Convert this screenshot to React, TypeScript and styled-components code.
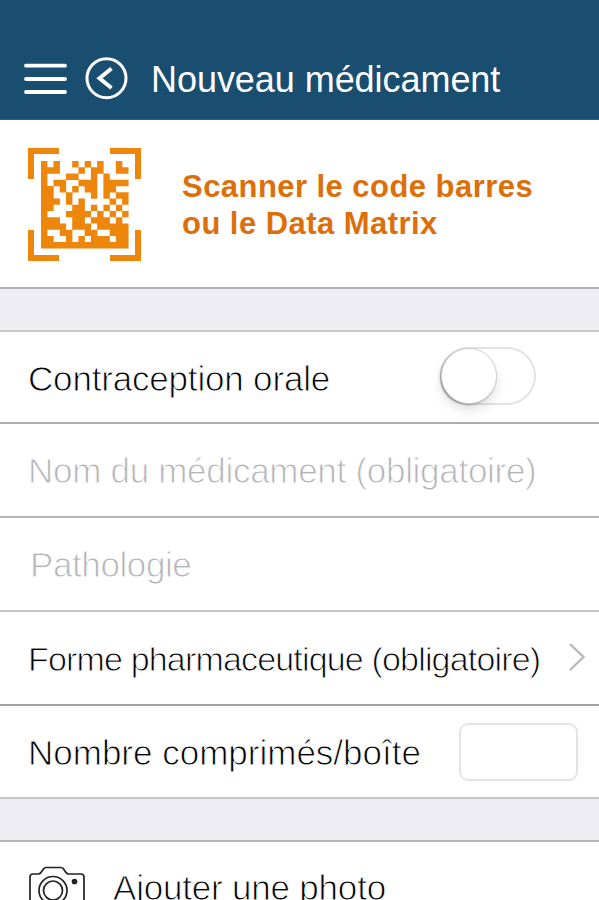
import React from "react";
import styled, { createGlobalStyle } from "styled-components";

const GlobalStyle = createGlobalStyle`
  * { box-sizing: border-box; }
  body { margin: 0; background: #fff; overflow: hidden; }
`;

const Screen = styled.div`
  width: 599px;
  height: 900px;
  overflow: hidden;
  display: flex;
  flex-direction: column;
  background: #fff;
  font-family: "Liberation Sans", Arial, Helvetica, sans-serif;
`;

const Header = styled.header`
  height: 120px;
  flex: none;
  display: flex;
  align-items: center;
  padding: 38px 0 0 24px;
  background: #1a4e71;
  border-bottom: 1px solid #2f5f80;
  color: #fff;
`;

const IconButton = styled.button<{ $gap: number }>`
  display: flex;
  padding: 0;
  margin: 0 ${(p) => p.$gap}px 0 0;
  border: 0;
  background: none;
  color: inherit;
`;

const Title = styled.h1`
  margin: 2px 0 0 -1px;
  font-size: 36px;
  font-weight: 400;
  line-height: 40px;
  letter-spacing: -0.05px;
  white-space: nowrap;
`;

const ScanRow = styled.section`
  height: 169px;
  flex: none;
  display: flex;
  align-items: center;
  padding: 2px 0 0 28px;
  gap: 41px;
  border-bottom: 2px solid #b2b2b4;
`;

const ScanLabel = styled.p`
  margin: 0;
  color: #dc6f0a;
  font-size: 31px;
  font-weight: 700;
  line-height: 37px;
  letter-spacing: 0.45px;
  white-space: nowrap;
`;

const Gap = styled.div<{ $height: number; $line: string }>`
  height: ${(p) => p.$height}px;
  flex: none;
  background: #eeedf4;
  border-bottom: 2px solid ${(p) => p.$line};
`;

const Row = styled.div<{ $height: number; $line: string; $indent?: number }>`
  height: ${(p) => p.$height}px;
  flex: none;
  display: flex;
  align-items: center;
  padding-left: ${(p) => p.$indent ?? 28}px;
  border-bottom: 2px solid ${(p) => p.$line};
`;

/* The white stroke thins the regular weight down to a light one. */
const Label = styled.span<{ $muted?: boolean; $spacing?: number; $size?: number; $drop?: number }>`
  flex: 1;
  min-width: 0;
  padding-top: ${(p) => p.$drop ?? 2}px;
  font-size: ${(p) => p.$size ?? 35}px;
  line-height: 42px;
  letter-spacing: ${(p) => p.$spacing ?? 0}px;
  white-space: nowrap;
  color: ${(p) => (p.$muted ? "#b4b4b9" : "#000")};
  -webkit-text-stroke: 0.9px #fff;
`;

const Switch = styled.div`
  width: 96px;
  height: 58px;
  flex: none;
  margin: 0 63px 2px 0;
  border: 2px solid #e3e3e3;
  border-radius: 29px;
`;

const Knob = styled.div`
  width: 56px;
  height: 56px;
  margin: -1px 0 0 -1px;
  border-radius: 50%;
  background: #fff;
  border: 1px solid #d4d4d4;
  box-shadow: -1px 1px 2px rgba(0, 0, 0, 0.35), 0 6px 12px rgba(0, 0, 0, 0.12);
`;

const CountField = styled.input`
  width: 119px;
  height: 58px;
  flex: none;
  margin: 0 21px 0 0;
  border: 2px solid #e4e4e4;
  border-radius: 9px;
  background: #fff;
`;

const Chevron = styled.svg`
  flex: none;
  margin: 0 13px 2px 0;
`;

const PhotoRow = styled.div`
  height: 90px;
  flex: none;
  display: flex;
  align-items: center;
  padding: 0 0 0 28px;
  gap: 27px;
`;

const MATRIX = [
  "X.X..X.X.X..X.",
  "XXX...X.XX..XX",
  "X...XX..X.X...",
  "X.XX..XXX.XXXX",
  "XX.X.X.XX.XX..",
  "XX..X...X.X.XX",
  "XXX.X.X....X.X",
  "XX...XX.X.X.X.",
  "X...XXXX.X.X.X",
  "XXX..XX.XXX.X.",
  "XXXX.XXX.XXXXX",
  "X..XX..XX..XXX",
  "XX..X.X.XXX.XX",
  "XXXXXXXXXXXXXX",
];

const matrixPath = MATRIX.flatMap((line, y) =>
  [...line].map((c, x) => (c === "X" ? `M${x} ${y}h1.03v1.03h-1.03z` : ""))
).join("");

const DataMatrixIcon = () => (
  <svg width="113" height="113" viewBox="0 0 113 113">
    <path
      d="M3 31V3H31M82 3H110V31M110 82V110H82M31 110H3V82"
      fill="none"
      stroke="#ee860b"
      strokeWidth="6"
    />
    <path transform="translate(13 13) scale(6.24)" fill="#ee860b" d={matrixPath} />
  </svg>
);

export default function App() {
  return (
    <>
      <GlobalStyle />
      <Screen>
        <Header>
          <IconButton $gap={18} aria-label="Menu">
            <svg width="43" height="42" viewBox="0 0 43 42" stroke="#fff" strokeWidth="3.8" strokeLinecap="round">
              <path d="M2 7.7H41M2 21H41M2 34H41" />
            </svg>
          </IconButton>
          <IconButton $gap={24} aria-label="Retour">
            <svg width="43" height="43" viewBox="0 0 43 43" fill="none" stroke="#fff">
              <circle cx="21.5" cy="21.2" r="19.5" strokeWidth="3" />
              <path d="M26.5 11.5L14.5 21.2L26.5 31" strokeWidth="4" />
            </svg>
          </IconButton>
          <Title>Nouveau médicament</Title>
        </Header>

        <ScanRow>
          <DataMatrixIcon />
          <ScanLabel>
            Scanner le code barres
            <br />
            ou le Data Matrix
          </ScanLabel>
        </ScanRow>

        <Gap $height={43} $line="#c8c8cb" />

        <Row $height={92} $line="#adadad">
          <Label $spacing={-0.18} $drop={4}>Contraception orale</Label>
          <Switch role="switch" aria-checked={false}>
            <Knob />
          </Switch>
        </Row>
        <Row $height={94} $line="#b5b5b5">
          <Label $muted $spacing={-0.29}>Nom du médicament (obligatoire)</Label>
        </Row>
        <Row $height={94} $line="#c8c8c8" $indent={30}>
          <Label $muted $spacing={-0.4}>Pathologie</Label>
        </Row>
        <Row $height={94} $line="#a4a4a4">
          <Label $size={34} $spacing={-0.83}>Forme pharmaceutique (obligatoire)</Label>
          <Chevron width="18" height="30" viewBox="0 0 18 30" fill="none" stroke="#b8b8b8" strokeWidth="2.4">
            <path d="M2 2L15.5 15L2 28" />
          </Chevron>
        </Row>
        <Row $height={93} $line="#c6c6c8">
          <Label>Nombre comprimés/boîte</Label>
          <CountField aria-label="Nombre" />
        </Row>

        <Gap $height={43} $line="#b4b4b6" />

        <PhotoRow>
          <svg width="58" height="46" viewBox="0 0 58 46" fill="none" stroke="#222" strokeWidth="1.7">
            <path d="M5 10H10Q12 10 13 8.500L15.500 5Q16.500 3.500 18 3.500H33Q34.500 3.500 35.500 5L38 8.500Q39 10 41 10H53Q56 10 56 13V41Q56 44 53 44H5Q2 44 2 41V13Q2 10 5 10Z" />
            <circle cx="25" cy="26.500" r="14" />
            <circle cx="25" cy="26.500" r="9.500" />
            <circle cx="46.500" cy="17.500" r="2" fill="#222" />
          </svg>
          <Label $spacing={-0.2}>Ajouter une photo</Label>
        </PhotoRow>
      </Screen>
    </>
  );
}
